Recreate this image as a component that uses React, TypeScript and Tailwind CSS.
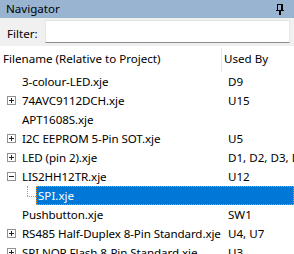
import React from "react";

type Item = {
  name: string;
  usedBy: string;
  expander?: "plus" | "minus";
};

const items: Item[] = [
  { name: "3-colour-LED.xje", usedBy: "D9" },
  { name: "74AVC9112DCH.xje", usedBy: "U15", expander: "plus" },
  { name: "APT1608S.xje", usedBy: "" },
  { name: "I2C EEPROM 5-Pin SOT.xje", usedBy: "U5", expander: "plus" },
  { name: "LED (pin 2).xje", usedBy: "D1, D2, D3, D4, D5", expander: "plus" },
  { name: "LIS2HH12TR.xje", usedBy: "U12", expander: "minus" },
];

const after: Item[] = [
  { name: "Pushbutton.xje", usedBy: "SW1" },
  { name: "RS485 Half-Duplex 8-Pin Standard.xje", usedBy: "U4, U7", expander: "plus" },
  { name: "SPI NOR Flash 8-Pin Standard.xje", usedBy: "U3", expander: "plus" },
];

function Expander({ kind }: { kind: "plus" | "minus" }) {
  return (
    <svg width="9" height="9" viewBox="0 0 9 9" shapeRendering="crispEdges" className="block">
      <rect x="0.5" y="0.5" width="8" height="8" fill="#fff" stroke="#919191" />
      <rect x="2" y="4" width="5" height="1" fill="#222" />
      {kind === "plus" && <rect x="4" y="2" width="1" height="5" fill="#222" />}
    </svg>
  );
}

function PinIcon() {
  return (
    <svg width="8" height="11" viewBox="0 0 8 11" shapeRendering="crispEdges" className="block">
      <rect x="1" y="0" width="6" height="1" fill="#000" />
      <rect x="1" y="0" width="1" height="6" fill="#000" />
      <rect x="5" y="0" width="2" height="6" fill="#000" />
      <rect x="0" y="6" width="8" height="1" fill="#000" />
      <rect x="3" y="7" width="2" height="4" fill="#000" />
    </svg>
  );
}

function Row({ item }: { item: Item }) {
  return (
    <div className="flex h-[19px] items-center">
      <div className="flex w-[221px] shrink-0 items-center overflow-hidden whitespace-nowrap">
        <div className="flex w-[22px] shrink-0 justify-start pl-[7px]">
          {item.expander && <Expander kind={item.expander} />}
        </div>
        <span className="tracking-[-0.1px]">{item.name}</span>
      </div>
      <div className="whitespace-nowrap pl-[7px]">{item.usedBy}</div>
    </div>
  );
}

export default function App() {
  return (
    <div
      className="h-[254px] w-[294px] overflow-hidden bg-white text-[11.6px] leading-[16px] text-black"
      style={{ fontFamily: '"Noto Sans", "Open Sans", sans-serif' }}
    >
      <div className="flex h-[18px] items-center justify-between bg-[#99b4d1] pl-[6px] pr-[10px]">
        <span>Navigator</span>
        <PinIcon />
      </div>

      <div className="flex h-[28px] items-start bg-[#f0f0f0] pl-[7px] pr-[4px]">
        <span className="mt-[8px] w-[38px] shrink-0">Filter:</span>
        <div className="mt-[2px] h-[23px] flex-1 border border-[#e6e6e6] border-b-[#8a8a8a] bg-white" />
      </div>

      <div className="flex h-[26px] items-center">
        <div className="w-[221px] shrink-0 whitespace-nowrap pl-[3px]">Filename (Relative to Project)</div>
        <div className="h-[24px] w-px self-end bg-[#e5e5e5]" />
        <div className="whitespace-nowrap pl-[2px]">Used By</div>
      </div>

      {items.map((item) => (
        <Row key={item.name} item={item} />
      ))}

      <div className="flex h-[19px] items-stretch">
        <div className="relative w-[36px] shrink-0">
          <div className="absolute left-[27px] top-0 h-[10px] border-l border-dotted border-[#a0a0a0]" />
          <div className="absolute left-[27px] top-[10px] w-[9px] border-t border-dotted border-[#a0a0a0]" />
        </div>
        <div className="flex flex-1 items-center border border-dotted border-[#ff8c00] bg-[#0078d7] pl-[1px] text-white">
          SPI.xje
        </div>
      </div>

      {after.map((item) => (
        <Row key={item.name} item={item} />
      ))}
    </div>
  );
}
